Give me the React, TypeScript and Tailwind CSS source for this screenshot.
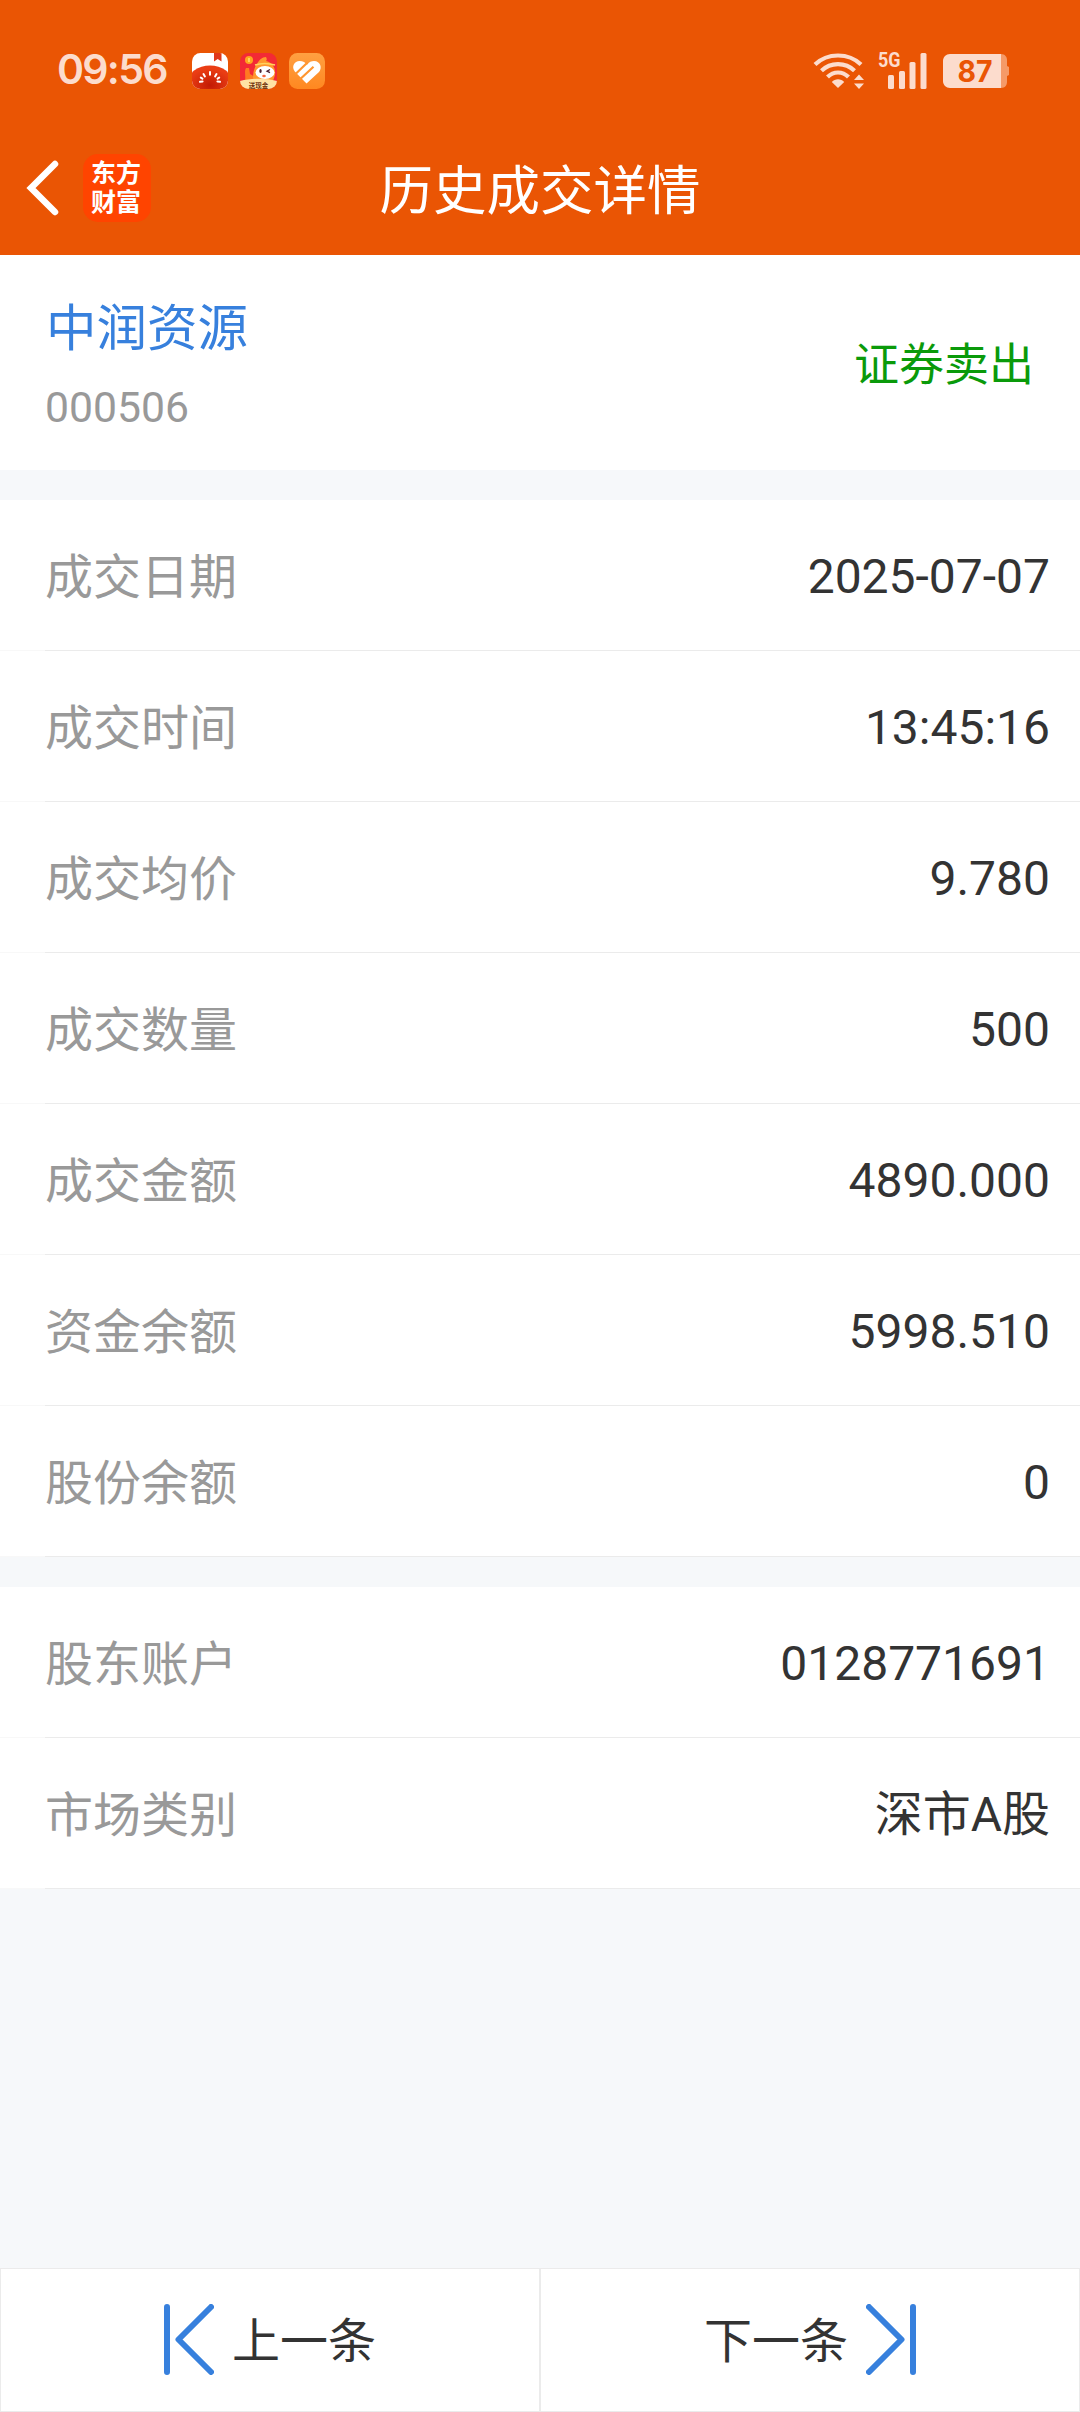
import type { ReactNode } from "react";

type Item = { label: string; value: string };

const tradeRows: Item[] = [
  { label: "成交日期", value: "2025-07-07" },
  { label: "成交时间", value: "13:45:16" },
  { label: "成交均价", value: "9.780" },
  { label: "成交数量", value: "500" },
  { label: "成交金额", value: "4890.000" },
  { label: "资金余额", value: "5998.510" },
  { label: "股份余额", value: "0" },
];

const accountRows: Item[] = [
  { label: "股东账户", value: "0128771691" },
  { label: "市场类别", value: "深市A股" },
];

function TomatoIcon() {
  return (
    <svg width="36" height="36" viewBox="0 0 36 36">
      <defs>
        <clipPath id="tomato-clip">
          <rect width="36" height="36" rx="8.5" />
        </clipPath>
        <radialGradient id="tomato" cx="0.5" cy="0.6" r="0.5">
          <stop offset="0" stopColor="#c21a04" />
          <stop offset="1" stopColor="#ea3d14" />
        </radialGradient>
      </defs>
      <g clipPath="url(#tomato-clip)">
        <rect width="36" height="36" fill="#fff" />
        <path d="M22 0h7.500v8.500L25.700 6 22 8.500z" fill="#e0391a" />
        <ellipse cx="18" cy="29" rx="22" ry="16.5" fill="url(#tomato)" />
        <g stroke="#fff" strokeWidth="2" strokeLinecap="round">
          <path d="M18 19v2.800M11.500 21l1.400 2.400M24.500 21l-1.400 2.400M8 28.800l2.600-.4M28 28.800l-2.600-.4M8.800 24.600l1.600 1M27.200 24.600l-1.600 1" />
        </g>
      </g>
    </svg>
  );
}

function MascotIcon() {
  return (
    <svg width="37" height="36" viewBox="0 0 37 36">
      <defs>
        <clipPath id="mascot-clip">
          <rect width="37" height="36" rx="8.5" />
        </clipPath>
      </defs>
      <g clipPath="url(#mascot-clip)">
        <rect width="37" height="36" fill="#f32a35" />
        <circle cx="9" cy="7" r="4" fill="#ffa51f" />
        <path d="M9 5v4" stroke="#ffe06b" strokeWidth="1.6" />
        <path d="M5 28c1-5-1-10 1-13h3l1 6 5 3v7H5z" fill="#ff7a22" />
        <path d="M14 31c-2-6-1-15 3-20 2-4 5-7 9-7 1 2 1 3 0 4 6 1 10 7 9 14l-3 9z" fill="#ff982e" />
        <path d="M15 12c6-2 13-2 20 0" fill="none" stroke="#ffd35e" strokeWidth="1.5" />
        <ellipse cx="25" cy="19.5" rx="9.5" ry="6.5" fill="#fff" />
        <ellipse cx="20.5" cy="18" rx="1.2" ry="2" fill="#4a2030" />
        <path d="M30 16.5l-3 1.700 3 1.500" fill="none" stroke="#4a2030" strokeWidth="1.3" />
        <ellipse cx="24" cy="23" rx="1.8" ry="1.3" fill="#f4663e" />
        <path d="M0 28c12-3 25-3 37 0v8H0z" fill="#ffe2a4" />
        <text
          x="18.5"
          y="34.5"
          fontSize="6.5"
          textAnchor="middle"
          fill="#70320f"
          className="font-['Noto_Sans_CJK_SC',sans-serif] font-bold"
        >
          送现金
        </text>
      </g>
    </svg>
  );
}

function HeartIcon() {
  return (
    <svg width="36" height="36" viewBox="0 0 36 36">
      <defs>
        <linearGradient id="heart" x1="0" y1="0" x2="0" y2="1">
          <stop offset="0" stopColor="#ffa042" />
          <stop offset="1" stopColor="#ff8820" />
        </linearGradient>
      </defs>
      <rect width="36" height="36" rx="8.5" fill="url(#heart)" />
      <path
        d="M17.500 30.500L5.800 18.500C2 13.500 5.500 8 10.500 8c3.500 0 6 1.700 7.500 3.800C20 9 22.500 8 25 8c6.500 0 8.500 7 5 11z"
        fill="#fff"
      />
      <path d="M6 21.500L18.500 9.500M10.500 26.800L24.500 13.800" fill="none" stroke="#ff9630" strokeWidth="2.2" />
    </svg>
  );
}

function WifiIcon() {
  return (
    <svg width="52" height="38" viewBox="0 0 52 38" fill="none" stroke="#fcdccd" strokeWidth="4.2">
      <path d="M2 12.500C14.500 .5 35.500 .5 48 12.500" />
      <path d="M8.500 18.800C17.500 10 32.500 10 41.500 18.800" />
      <path d="M14.500 25C20.500 19 29.500 19 35.500 25" />
      <path d="M18.800 30C22 26.200 28 26.200 31.200 30L25 36z" fill="#fcdccd" stroke="none" />
      <path d="M46 22.500l5 5.500H41zM46 37l5-5.500H41z" fill="#fcdccd" stroke="none" />
    </svg>
  );
}

function SignalIcon() {
  return (
    <svg className="overflow-visible" width="50" height="38" viewBox="0 0 50 38" fill="#fcdccd">
      <text
        x="0"
        y="15"
        fontSize="21"
        textLength="22.5"
        lengthAdjust="spacingAndGlyphs"
        className="font-['Roboto',sans-serif] font-bold"
      >
        5G
      </text>
      <rect x="10" y="23" width="6" height="14" rx="1.5" />
      <rect x="21" y="19" width="6" height="18" rx="1.5" />
      <rect x="31.5" y="10" width="6" height="27" rx="1.5" />
      <rect x="42.5" y="1" width="6" height="36" rx="1.5" />
    </svg>
  );
}

function Battery() {
  return (
    <svg width="66" height="34" viewBox="0 0 66 34">
      <path d="M58 0c4 0 6 3 6 6v6l2 1v8l-2 1v6c0 3-2 6-6 6z" fill="#f59a68" />
      <path d="M7 0h51v34H7c-4 0-7-3-7-7V7c0-4 3-7 7-7z" fill="#fcdccd" />
      <text
        x="32"
        y="28"
        fontSize="30"
        textAnchor="middle"
        textLength="35"
        lengthAdjust="spacingAndGlyphs"
        fill="#ea5504"
        className="font-['Inter',sans-serif] font-bold"
      >
        87
      </text>
    </svg>
  );
}

function StatusBar() {
  return (
    <div className="flex h-[142px] items-center justify-between pr-[71px] pl-[57px]">
      <div className="flex items-center">
        <span className="w-[135px] pb-[3px] font-['Inter',sans-serif] text-[41px] leading-none font-semibold tracking-[-1.7px] text-[#fcdccd]">
          09:56
        </span>
        <div className="flex items-center gap-3">
          <TomatoIcon />
          <MascotIcon />
          <HeartIcon />
        </div>
      </div>
      <div className="flex items-center">
        <WifiIcon />
        <div className="ml-[13px]">
          <SignalIcon />
        </div>
        <div className="ml-[15px]">
          <Battery />
        </div>
      </div>
    </div>
  );
}

function NavBar() {
  return (
    <div className="grid h-[113px] grid-cols-[1fr_auto_1fr] items-center">
      <div className="flex items-center pb-[22px] pl-[25px]">
        <svg width="34" height="56" viewBox="0 0 34 56" fill="none" stroke="#fff" strokeWidth="6.5" strokeLinecap="round">
          <path d="M30 4L6 28l24 24" />
        </svg>
        <div className="ml-6 flex h-[68px] w-[68px] flex-col items-center justify-center rounded-[15px] bg-[#ff4400] pr-0.5 text-[25px] leading-[29px] font-bold text-white">
          <span>东方</span>
          <span>财富</span>
        </div>
      </div>
      <h1 className="pb-[13px] text-[53.5px] leading-none text-white">历史成交详情</h1>
    </div>
  );
}

function Row({ label, value }: Item) {
  return (
    <div>
      <div className="flex h-[150px] items-center justify-between pr-[30px] pl-[45px] text-[48px] leading-none">
        <span className="pt-[5px] text-[#999999]">{label}</span>
        <span className="pt-1 text-[#333333]">{value}</span>
      </div>
      <div className="flex h-px">
        <div className="w-[45px] bg-[#f8f8f8]" />
        <div className="flex-1 bg-[#ebebeb]" />
      </div>
    </div>
  );
}

function FooterButton({ children }: { children: ReactNode }) {
  return (
    <button className="flex h-full flex-1 items-center justify-center border border-[#ebebeb] bg-white text-[48px] leading-none text-[#333333]">
      {children}
    </button>
  );
}

export default function App() {
  return (
    <div className="flex h-[2412px] w-[1080px] flex-col bg-[#f6f8fa] font-['Roboto','Noto_Sans_CJK_SC',sans-serif]">
      <header className="h-[255px] bg-[#ea5504]">
        <StatusBar />
        <NavBar />
      </header>

      {/* Stock summary */}
      <section className="flex h-[215px] items-center justify-between bg-white pr-[46px] pl-[45px]">
        <div className="flex flex-col pt-[11px]">
          <span className="pl-px text-[50.5px] leading-[60px] text-[#3780dd]">中润资源</span>
          <span className="mt-[18px] text-[42.7px] leading-[60px] text-[#999999]">000506</span>
        </div>
        <span className="pt-1.5 text-[45px] leading-none text-[#0a9a0a]">证券卖出</span>
      </section>

      <section className="mt-[30px] bg-white">
        {tradeRows.map((row) => (
          <Row key={row.label} {...row} />
        ))}
      </section>

      <section className="mt-[30px] bg-white">
        {accountRows.map((row) => (
          <Row key={row.label} {...row} />
        ))}
      </section>

      <footer className="mt-auto flex h-36">
        <FooterButton>
          <svg className="mb-0.5" width="50" height="71" viewBox="0 0 50 71" fill="none" stroke="#3780dd" strokeWidth="6" strokeLinecap="round" strokeLinejoin="round">
            <path d="M3 3v65M47 3L14.500 35.500 47 68" />
          </svg>
          <span className="ml-[18px] pt-[3px]">上一条</span>
        </FooterButton>
        <FooterButton>
          <span className="mr-[18px] pt-[3px]">下一条</span>
          <svg className="mb-0.5" width="50" height="71" viewBox="0 0 50 71" fill="none" stroke="#3780dd" strokeWidth="6" strokeLinecap="round" strokeLinejoin="round">
            <path d="M47 3v65M3 3l32.500 32.500L3 68" />
          </svg>
        </FooterButton>
      </footer>
    </div>
  );
}
